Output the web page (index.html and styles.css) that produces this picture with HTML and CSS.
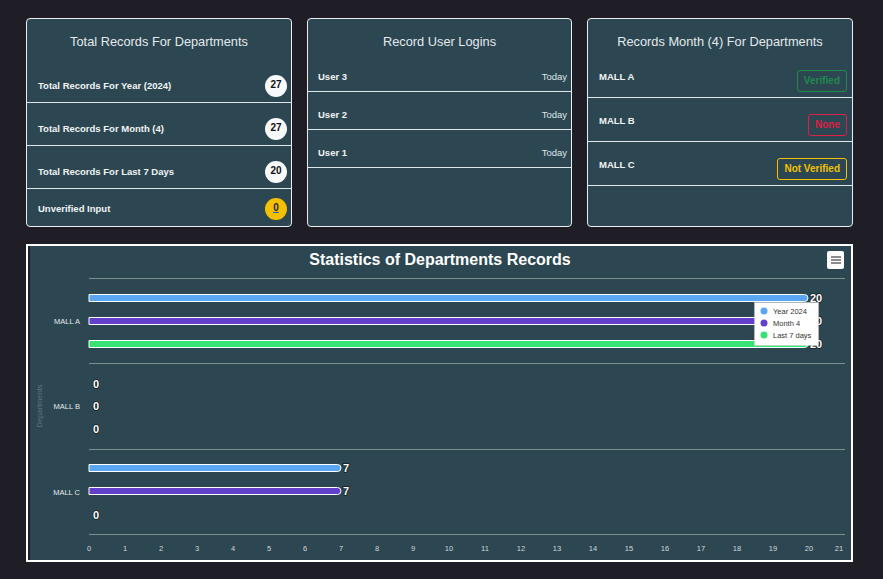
FILE: index.html
```html
<!DOCTYPE html>
<html lang="en">
<head>
<meta charset="utf-8">
<title>Departments Dashboard</title>
<link rel="stylesheet" href="styles.css">
</head>
<body>
<div class="page">
  <div class="cards">
    <section class="card">
      <h2 class="card-title title-tall">Total Records For Departments</h2>
      <ul class="list">
        <li class="row"><span class="label">Total Records For Year (2024)</span><span class="pill">27</span></li>
        <li class="row"><span class="label">Total Records For Month (4)</span><span class="pill">27</span></li>
        <li class="row"><span class="label">Total Records For Last 7 Days</span><span class="pill">20</span></li>
        <li class="row row-last"><span class="label">Unverified Input</span><a href="#" class="pill pill-warn">0</a></li>
      </ul>
    </section>
    <section class="card">
      <h2 class="card-title">Record User Logins</h2>
      <ul class="list">
        <li class="login-row"><span class="label">User 3</span><span class="when">Today</span></li>
        <li class="login-row"><span class="label">User 2</span><span class="when">Today</span></li>
        <li class="login-row"><span class="label">User 1</span><span class="when">Today</span></li>
      </ul>
    </section>
    <section class="card">
      <h2 class="card-title">Records Month (4) For Departments</h2>
      <ul class="list">
        <li class="status-row"><span class="label mall">MALL A</span><span class="tag tag-ok">Verified</span></li>
        <li class="status-row"><span class="label mall">MALL B</span><span class="tag tag-none">None</span></li>
        <li class="status-row"><span class="label mall">MALL C</span><span class="tag tag-warn">Not Verified</span></li>
      </ul>
    </section>
  </div>

  <section class="chart">
    <svg class="chart-svg" width="821" height="314" viewBox="0 0 821 314" xmlns="http://www.w3.org/2000/svg">
      <rect x="0" y="0" width="821" height="314" fill="#2c4752"/>
      <text x="410" y="19" class="c-title" text-anchor="middle">Statistics of Departments Records</text>

      <g class="menu">
        <rect x="797" y="5" width="17" height="18" rx="2" fill="#ffffff"/>
        <line x1="801" y1="11" x2="811" y2="11" stroke="#666" stroke-width="1.5"/>
        <line x1="801" y1="14" x2="811" y2="14" stroke="#666" stroke-width="1.5"/>
        <line x1="801" y1="17" x2="811" y2="17" stroke="#666" stroke-width="1.5"/>
      </g>

      <g stroke="#7f8c91" stroke-width="1">
        <line x1="59" y1="32.5" x2="815" y2="32.5"/>
        <line x1="59" y1="117.5" x2="815" y2="117.5"/>
        <line x1="59" y1="203.5" x2="815" y2="203.5"/>
        <line x1="59" y1="288.5" x2="815" y2="288.5"/>
      </g>

      <g class="c-axis" text-anchor="middle">
        <text x="59" y="305">0</text>
        <text x="95" y="305">1</text>
        <text x="131" y="305">2</text>
        <text x="167" y="305">3</text>
        <text x="203" y="305">4</text>
        <text x="239" y="305">5</text>
        <text x="275" y="305">6</text>
        <text x="311" y="305">7</text>
        <text x="347" y="305">8</text>
        <text x="383" y="305">9</text>
        <text x="419" y="305">10</text>
        <text x="455" y="305">11</text>
        <text x="491" y="305">12</text>
        <text x="527" y="305">13</text>
        <text x="563" y="305">14</text>
        <text x="599" y="305">15</text>
        <text x="635" y="305">16</text>
        <text x="671" y="305">17</text>
        <text x="707" y="305">18</text>
        <text x="743" y="305">19</text>
        <text x="779" y="305">20</text>
        <text x="809" y="305">21</text>
      </g>

      <g class="c-cat" text-anchor="end">
        <text x="50" y="78">MALL A</text>
        <text x="50" y="163">MALL B</text>
        <text x="50" y="249">MALL C</text>
      </g>
      <text class="c-ytitle" x="12" y="160" text-anchor="middle" transform="rotate(-90 12 160)">Departments</text>

      <g stroke="#ffffff" stroke-width="1">
        <path d="M59 48.5 H774.5 a3.5 3.5 0 0 1 0 7 H59 Z" fill="#5aa6f2"/>
        <path d="M59 71.5 H774.5 a3.5 3.5 0 0 1 0 7 H59 Z" fill="#6340c9"/>
        <path d="M59 94.5 H774.5 a3.5 3.5 0 0 1 0 7 H59 Z" fill="#36e274"/>
        <path d="M59 218.5 H307.5 a3.5 3.5 0 0 1 0 7 H59 Z" fill="#5aa6f2"/>
        <path d="M59 241.5 H307.5 a3.5 3.5 0 0 1 0 7 H59 Z" fill="#6340c9"/>
      </g>

      <g class="c-data">
        <text x="780" y="56">20</text>
        <text x="780" y="79">20</text>
        <text x="780" y="102">20</text>
        <text x="63" y="142">0</text>
        <text x="63" y="164">0</text>
        <text x="63" y="187">0</text>
        <text x="313" y="226">7</text>
        <text x="313" y="249">7</text>
        <text x="63" y="273">0</text>
      </g>

      <g class="legend">
        <rect x="724.5" y="56.5" width="64" height="43" fill="#ffffff" stroke="#cccccc" stroke-width="0.5"/>
        <circle cx="734" cy="65" r="3.5" fill="#5aa6f2"/>
        <circle cx="734" cy="77" r="3.5" fill="#6340c9"/>
        <circle cx="734" cy="89" r="3.5" fill="#36e274"/>
        <text x="743" y="67.7">Year 2024</text>
        <text x="743" y="79.7">Month 4</text>
        <text x="743" y="91.7">Last 7 days</text>
      </g>
    </svg>
  </section>
</div>
</body>
</html>
```

FILE: styles.css
```css
body {
  margin: 0;
  background: #1f1e27;
  font-family: "Liberation Sans", Arial, sans-serif;
}

.page {
  padding: 18px 30px 18px 26px;
}

.cards {
  display: grid;
  grid-template-columns: 266px 265px 266px;
  column-gap: 15px;
}

.card {
  height: 209px;
  box-sizing: border-box;
  border: 1px solid #e9eef0;
  border-radius: 4px;
  background: #2c4752;
  display: flex;
  flex-direction: column;
  overflow: hidden;
}

.card-title {
  margin: 0;
  height: 35px;
  box-sizing: border-box;
  padding-top: 16px;
  font-size: 12.8px;
  line-height: 14px;
  font-weight: normal;
  color: #e3e9ec;
  text-align: center;
}

.title-tall {
  height: 41px;
}

.list {
  list-style: none;
  margin: 0;
  padding: 0;
  flex: 1;
  display: flex;
  flex-direction: column;
}

.label {
  font-size: 9.5px;
  line-height: 10px;
  font-weight: bold;
  color: #f1f4f5;
}

.row {
  display: flex;
  align-items: center;
  justify-content: space-between;
  padding: 15px 4px 5px 11px;
  border-bottom: 1px solid #dfe7ea;
}

.row-last {
  flex: 1;
  align-items: flex-start;
  padding-top: 9px;
  border-bottom: none;
}

.row-last .label {
  margin-top: 6px;
}

.pill {
  width: 22px;
  height: 22px;
  border-radius: 50%;
  background: #f8f9fa;
  color: #111;
  font-size: 10px;
  font-weight: bold;
  line-height: 20px;
  text-align: center;
  text-decoration: none;
}

.pill-warn {
  background: #f5c000;
  color: #1b1f3a;
  text-decoration: underline;
  text-decoration-color: #2456c8;
}

.login-row {
  display: flex;
  align-items: flex-start;
  justify-content: space-between;
  height: 38px;
  padding: 18px 4px 0 10px;
  box-sizing: border-box;
  border-bottom: 1px solid #dfe7ea;
}

.when {
  font-size: 9.5px;
  line-height: 10px;
  color: #dfe6e9;
}

.status-row {
  display: flex;
  align-items: flex-start;
  justify-content: space-between;
  padding: 16px 5px 5px 11px;
  border-bottom: 1px solid #dfe7ea;
}

.mall {
  margin-top: 2px;
}

.tag {
  height: 22px;
  box-sizing: border-box;
  padding: 0 6px;
  border: 1px solid;
  border-radius: 3px;
  font-size: 10px;
  line-height: 20px;
  font-weight: bold;
}

.tag-ok {
  color: #1f8a4c;
  border-color: #1f8a4c;
}

.tag-none {
  color: #dc1f45;
  border-color: #dc1f45;
}

.tag-warn {
  color: #f2c200;
  border-color: #f2c200;
}

.chart {
  margin-top: 17px;
  height: 318px;
  box-sizing: border-box;
  border: 2px solid #ffffff;
  background: #1f1e27;
  padding-left: 2px;
}

.chart-svg {
  display: block;
  font-family: "Liberation Sans", Arial, sans-serif;
}

.c-title {
  font-size: 16px;
  font-weight: bold;
  fill: #ffffff;
}

.c-axis text {
  font-size: 7.5px;
  fill: #d3d8da;
}

.c-cat text {
  font-size: 7.5px;
  fill: #e6e9eb;
}

.c-ytitle {
  font-size: 7.5px;
  fill: #5e737c;
}

.c-data text {
  font-size: 11px;
  font-weight: bold;
  fill: #ffffff;
  stroke: #1a1a1a;
  stroke-width: 1.5px;
  paint-order: stroke;
}

.legend text {
  font-size: 7.5px;
  fill: #333333;
}
```
